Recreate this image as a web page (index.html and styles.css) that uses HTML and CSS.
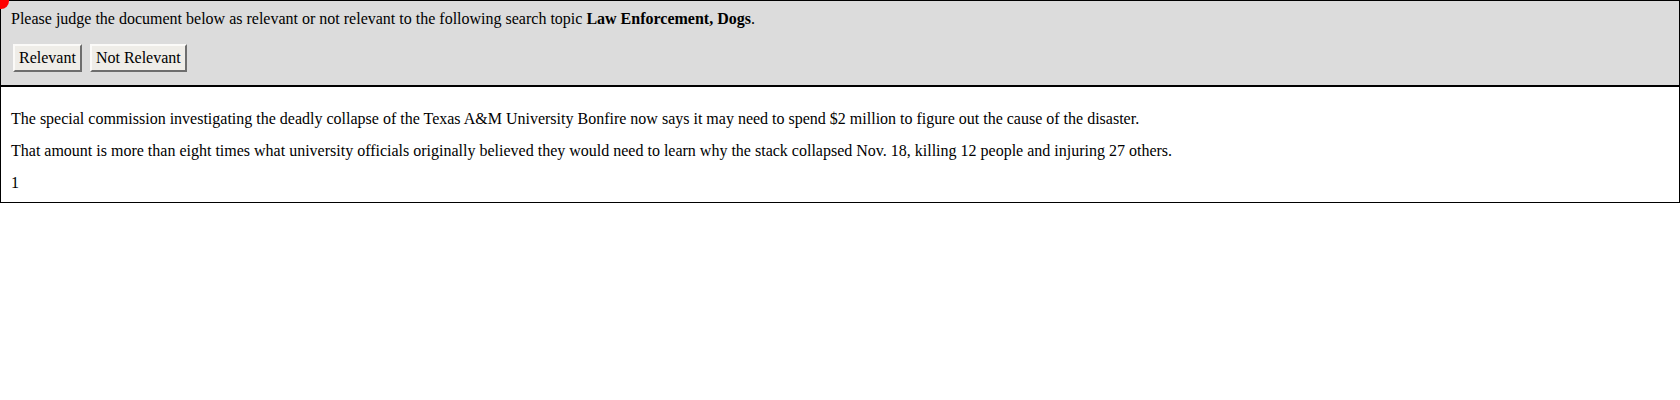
FILE: index.html
```html
<!DOCTYPE html>
<html>
<head>
<meta charset="utf-8">
<link rel="stylesheet" href="styles.css">
</head>
<body>
<div class="dot"></div>
<div class="frame">
  <div class="header">
    <div class="prompt">Please judge the document below as relevant or not relevant to the following search topic <b>Law Enforcement, Dogs</b>.</div>
    <div class="buttons">
      <button class="btn">Relevant</button>
      <button class="btn">Not Relevant</button>
    </div>
  </div>
  <div class="doc">
    <p>The special commission investigating the deadly collapse of the Texas A&amp;M University Bonfire now says it may need to spend $2 million to figure out the cause of the disaster.</p>
    <p>That amount is more than eight times what university officials originally believed they would need to learn why the stack collapsed Nov. 18, killing 12 people and injuring 27 others.</p>
    <p>1</p>
  </div>
</div>
</body>
</html>
```
FILE: styles.css
```css
html, body {
  margin: 0;
  padding: 0;
  background: #fff;
}
body {
  font-family: "Liberation Serif", "Times New Roman", serif;
  font-size: 16px;
  color: #000;
}
.frame {
  border: 1px solid #000;
}
.header {
  background: #dcdcdc;
  border-bottom: 2px solid #000;
  padding: 8px 10px 13px 10px;
}
.prompt {
  line-height: 20px;
}
.buttons {
  display: flex;
  gap: 8px;
  margin-top: 15px;
  padding-left: 2px;
}
.btn {
  font-family: "Liberation Serif", "Times New Roman", serif;
  font-size: 16px;
  background: #efede8;
  color: #000;
  border: 2px solid;
  border-color: #fbfaf8 #6e6e6e #6e6e6e #fbfaf8;
  padding: 0 4px;
  height: 28px;
  line-height: 20px;
}
.doc {
  padding: 22px 10px 9px 10px;
}
.doc p {
  margin: 0 0 12px 0;
  line-height: 20px;
}
.doc p:last-child {
  margin-bottom: 0;
}
.dot {
  position: absolute;
  left: -7px;
  top: -7px;
  width: 16px;
  height: 16px;
  border-radius: 50%;
  background: #f00;
}
```
